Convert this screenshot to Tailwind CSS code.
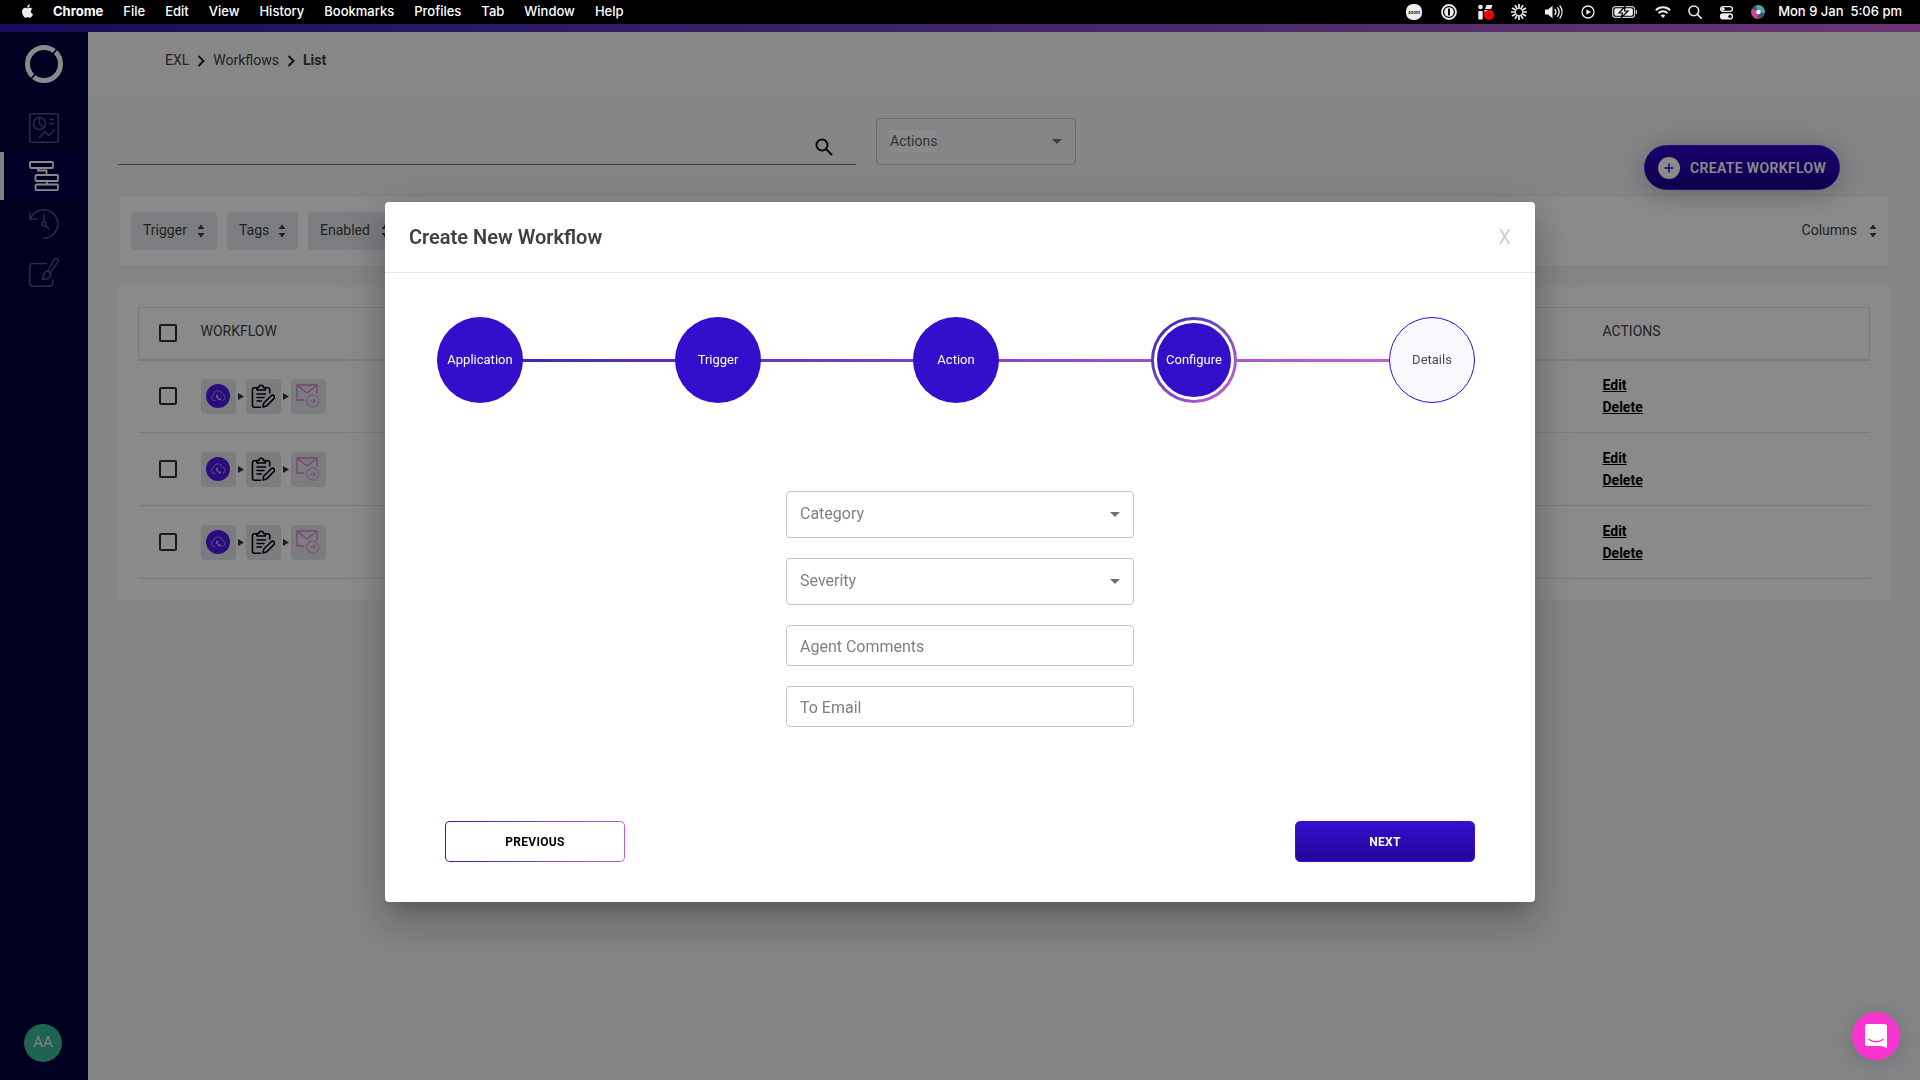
<!DOCTYPE html>
<html lang="en">
<head>
    <meta charset="UTF-8">
    <meta name="viewport" content="width=device-width, initial-scale=1.0">
    <title>Workflows - Create New Workflow</title>
    <script src="https://cdn.jsdelivr.net/npm/@tailwindcss/browser@4"></script>
</head>
<body class="flex min-h-screen flex-col bg-[#f4f6f9] font-[Roboto,'Noto_Sans',sans-serif] text-sm text-[#3f4045]">

    <!-- Shared icons -->
    <svg class="hidden">
        <symbol id="sort" viewBox="0 0 8 14">
            <path d="M4 0.5 7.500 5h-7zM4 13.500 7.500 9h-7z" fill="currentColor"/>
        </symbol>
        <symbol id="cloud" viewBox="0 0 24 24">
            <circle cx="12" cy="12" r="12" fill="#4f17e8"/>
            <path d="M9.500 16.500H8.300a3 3 0 0 1-.9-5.800 4.700 4.700 0 0 1 9.200-.3 3.100 3.100 0 0 1-.2 6.100" fill="none" stroke="#a48cf0" stroke-width="1"/>
            <path d="M10.500 10.500c-1.400 2.500 1.300 6 4.500 5.800l.3-1.500-1.500-.6-.8.600-1.400-1.800.6-.8-.5-1.500z" fill="#c5b5fa"/>
        </symbol>
        <symbol id="clipboard" viewBox="0 0 24 24">
            <g fill="none" stroke="#000" stroke-width="1.600" stroke-linecap="round" stroke-linejoin="round">
                <path d="M6 3.800H3.200A1.700 1.700 0 0 0 1.500 5.500v16a1.700 1.700 0 0 0 1.700 1.700H9.500M14 3.800h3a1.700 1.700 0 0 1 1.700 1.700V9"/>
                <path d="M6 6V3.500h2a2.200 2.200 0 0 1 4.400 0h2V6z"/>
                <path d="M6 10h8.500M6 13.500h7M6 17h4.500"/>
                <path d="m12 23 .8-4 7.500-7.300a1.900 1.900 0 0 1 2.700 2.700L15.500 22z"/>
            </g>
        </symbol>
        <symbol id="mail" viewBox="0 0 24 24">
            <g fill="none" stroke-width="1.300">
                <path d="M8.500 16H1V1h20v9" stroke="#e07fce"/>
                <path d="m1 1 8.600 7a2.200 2.200 0 0 0 2.800 0L21 1" stroke="#e07fce"/>
                <circle cx="16.800" cy="17" r="6" stroke="#dba9d6"/>
                <path d="M14 17h5.500m-2.300-2.300 2.300 2.300-2.300 2.300" stroke="#dba9d6"/>
            </g>
        </symbol>
    </svg>

    <!-- System menu bar -->
    <header class="relative z-30 flex h-6 items-center justify-between bg-black pr-[18px] pl-5 font-[Inter,sans-serif] text-[13px] leading-5 font-medium text-white">
        <nav class="flex items-center gap-5 pb-0.5">
            <svg class="h-4 w-[13px]" viewBox="0 0 14 17" fill="#eee"><path d="M11.600 9c0-1.700 1.400-2.500 1.500-2.600-.8-1.200-2.100-1.400-2.500-1.400-1.100-.1-2.100.6-2.600.6-.6 0-1.400-.6-2.300-.6C4.500 5 3.400 5.700 2.800 6.700c-1.300 2.200-.3 5.400.9 7.200.6.9 1.300 1.800 2.300 1.800.9 0 1.300-.6 2.400-.6s1.400.6 2.400.6 1.600-.9 2.200-1.700c.7-1 1-2 1-2-.1-.1-2.400-.9-2.400-3zM9.800 3.800c.5-.6.800-1.400.7-2.300-.7 0-1.600.5-2.100 1.100-.4.500-.8 1.400-.7 2.200.8.100 1.600-.4 2.100-1z"/></svg>
            <span class="font-bold">Chrome</span>
            <span>File</span>
            <span>Edit</span>
            <span>View</span>
            <span>History</span>
            <span>Bookmarks</span>
            <span>Profiles</span>
            <span>Tab</span>
            <span>Window</span>
            <span>Help</span>
        </nav>
        <div class="flex items-center gap-[17px]">
            <svg class="mr-0.5 size-4" viewBox="0 0 16 16"><rect width="16" height="16" rx="7" fill="#eee"/><text x="8" y="9.500" font-size="4.500" font-weight="700" text-anchor="middle" fill="#222">zoom</text></svg>
            <svg class="mr-1 size-4" viewBox="0 0 16 16"><circle cx="8" cy="8" r="7" fill="none" stroke="#eee" stroke-width="1.800"/><circle cx="8" cy="8" r="4.800" fill="#eee"/><rect x="7" y="4.500" width="2" height="7" rx=".6" fill="#000"/></svg>
            <svg class="size-4" viewBox="0 0 16 16"><circle cx="2.500" cy="3" r="2.300" fill="#eee"/><path d="M.3 7h4.400v8.500H.3zM8.500 1h6L13 5H7zM6.500 6h5l-1 3H6.500z" fill="#eee"/><circle cx="11" cy="11" r="5" fill="#f00"/><circle cx="11" cy="11" r="1.600" fill="#700"/></svg>
            <svg class="size-4" viewBox="0 0 16 16" stroke="#eee" stroke-width="1.700"><path d="M8 0v5M8 11v5M0 8h5M11 8h5M4 1.100l2.500 4.300M9.500 10.600l2.500 4.300M12 1.100 9.500 5.400M6.500 10.600 4 14.900M1.100 4l4.300 2.500M10.600 9.500l4.300 2.500M14.900 4l-4.300 2.500M5.400 9.500 1.100 12"/></svg>
            <svg class="h-4 w-5" viewBox="0 0 20 16"><path d="M1 5.500h3l4.500-3.700v12.400L4 10.500H1z" fill="#eee"/><path d="M11 5.500a4 4 0 0 1 0 5M13.500 3.700a7 7 0 0 1 0 8.600M16 2a10 10 0 0 1 0 12" fill="none" stroke="#eee" stroke-width="1.300" stroke-linecap="round"/></svg>
            <svg class="size-[14px]" viewBox="0 0 14 14"><circle cx="7" cy="7" r="6" fill="none" stroke="#eee" stroke-width="1.300"/><path d="m5.300 4.300 4.500 2.700-4.500 2.700z" fill="#eee"/></svg>
            <svg class="h-3 w-[26px]" viewBox="0 0 26 12"><rect x=".6" y=".6" width="22" height="10.800" rx="3" fill="none" stroke="#ccc" stroke-width="1.100"/><rect x="2.300" y="2.300" width="18.600" height="7.400" rx="1.600" fill="#eee"/><path d="M13 .5 7 7h3.500L9.500 11.500 16 5h-3.500z" fill="#eee" stroke="#000" stroke-width="1.200"/><path d="M24.300 4v4" stroke="#ccc" stroke-width="1.200"/></svg>
            <svg class="h-3 w-4" viewBox="0 0 16 12" fill="none" stroke="#eee" stroke-width="1.900"><path d="M.8 4.300a10.200 10.200 0 0 1 14.400 0M3.500 7.100a6.400 6.400 0 0 1 9 0"/><path d="m8 12-2.300-2.500a3.300 3.300 0 0 1 4.600 0z" fill="#eee" stroke="none"/></svg>
            <svg class="size-[14px]" viewBox="0 0 14 14" fill="none" stroke="#eee" stroke-width="1.500"><circle cx="5.800" cy="5.800" r="4.900"/><path d="m9.400 9.400 4 4" stroke-linecap="round"/></svg>
            <svg class="size-[15px]" viewBox="0 0 15 15"><rect x="1.600" y="1.600" width="11.800" height="4.800" rx="2.400" fill="none" stroke="#eee" stroke-width="1.300"/><circle cx="4" cy="4" r="1.800" fill="#eee"/><rect x=".9" y="8.300" width="13.200" height="6.200" rx="3.100" fill="#eee"/><circle cx="11" cy="11.400" r="1.700" fill="#000"/></svg>
            <svg class="size-[14px]" viewBox="0 0 14 14"><circle cx="7" cy="7" r="7" fill="#44506e"/><path d="M1 4a7 7 0 0 0 5 9.900c2-2 1-4 1-6.900C5 5 3 4 1 4z" fill="#c04a90"/><path d="M5 .4A7 7 0 0 1 13.900 8C11 8 9 7 7 6 6 4 5 2 5 .4z" fill="#4aa79f"/><circle cx="7.500" cy="7" r="2.300" fill="#e8f4ff"/></svg>
            <span class="-ml-1 pb-0.5 whitespace-pre">Mon 9 Jan  5:06 pm</span>
        </div>
    </header>

    <div class="h-2 bg-linear-to-r from-[#2a14a8] to-[#c862d6]"></div>

    <div class="flex flex-1">
        <!-- Sidebar -->
        <aside class="flex w-22 shrink-0 flex-col items-center bg-[#00003c] pb-[18px]">
            <a href="#" aria-label="Home" class="mt-[13px] mb-[21px]">
                <svg class="block size-[38px]" viewBox="0 0 38 38" fill="none">
                    <circle cx="19" cy="19" r="16.500" stroke="#fff" stroke-width="5"/>
                    <path d="m27 10 5-6M11 28l-5 6" stroke="#00003c" stroke-width="1.600"/>
                </svg>
            </a>
            <nav class="flex w-full flex-col">
                <a href="#" aria-label="Reports" class="flex h-12 items-center justify-center text-[#53537a]">
                    <svg class="size-[30px]" viewBox="0 0 30 30" fill="none" stroke="currentColor" stroke-width="1.500">
                        <rect x=".8" y=".8" width="28.400" height="28.400" rx="2"/>
                        <circle cx="10.500" cy="10.500" r="6"/>
                        <path d="M10.500 4.500v6l4 4M20 6.500h5M20 10.500h5M10 25l6-6.500 3.500 4L26 16.500"/>
                    </svg>
                </a>
                <a href="#" aria-label="Workflows" class="flex h-12 items-center justify-center border-l-4 border-[#f0f0f0] bg-[#07004a] pr-1 text-white">
                    <svg class="size-[30px]" viewBox="0 0 30 30" fill="none" stroke="currentColor" stroke-width="1.800">
                        <rect x="1" y="1" width="23" height="6" rx="1"/>
                        <rect x="6.500" y="14" width="22.500" height="6" rx="1"/>
                        <rect x="6.500" y="23.500" width="22.500" height="5.600" rx="1"/>
                        <path d="M9 7v2.500h8.500V14M17.800 20v3.500"/>
                    </svg>
                </a>
                <a href="#" aria-label="History" class="flex h-12 items-center justify-center text-[#53537a]">
                    <svg class="size-[30px]" viewBox="0 0 30 30" fill="none" stroke="currentColor" stroke-width="1.500">
                        <path d="M1 3v7h7M1.500 9.500A14.200 14.200 0 1 1 14.500 29.200M15 5v8M16.500 16.500l4 4"/>
                        <circle cx="15" cy="15" r="2"/>
                    </svg>
                </a>
                <a href="#" aria-label="Editor" class="flex h-12 items-center justify-center text-[#53537a]">
                    <svg class="size-[30px]" viewBox="0 0 30 30" fill="none" stroke="currentColor" stroke-width="1.500">
                        <path d="M18 6.500H4A3.200 3.200 0 0 0 .8 9.700V26A3.200 3.200 0 0 0 4 29.200h16.500a3.200 3.200 0 0 0 3.200-3.200v-3.500"/>
                        <path d="M19 14 25.500 2a2.200 2.200 0 0 1 3.700 2.200L21.500 16zM19 14c-4 0-4.500 4-5.500 8.500 4.500.3 9-1.500 8-6.500z"/>
                    </svg>
                </a>
            </nav>
            <button class="mt-auto mr-0.5 size-[38px] rounded-full bg-[#3bb795] text-[15px] text-[#dff5ee]">AA</button>
        </aside>

        <!-- Main content -->
        <main class="min-w-0 flex-1">
            <nav class="flex h-[66px] items-start gap-2 bg-[#f9f9fc] pt-[18px] pl-[77px] leading-5">
                <a href="#">EXL</a>
                <svg class="mt-[5px] h-3 w-2" viewBox="0 0 8 12" fill="none" stroke="#222" stroke-width="2"><path d="m1.500 1 5 5-5 5"/></svg>
                <a href="#">Workflows</a>
                <svg class="mt-[5px] h-3 w-2" viewBox="0 0 8 12" fill="none" stroke="#222" stroke-width="2"><path d="m1.500 1 5 5-5 5"/></svg>
                <a href="#" class="font-bold">List</a>
            </nav>

            <div class="px-[30px] pt-5">
                <div class="flex h-[77px] items-start gap-5">
                    <div class="flex h-[47px] w-[738px] items-center border-b border-[#77787c] pr-[23px]">
                        <input type="search" aria-label="Search workflows" class="h-full min-w-0 flex-1 outline-none">
                        <button aria-label="Search" class="mt-3">
                            <svg class="block size-[18px]" viewBox="0 0 18 18" fill="none" stroke="#111" stroke-width="2"><circle cx="7" cy="7" r="5.500"/><path d="m11 11 6 6"/></svg>
                        </button>
                    </div>
                    <div class="relative h-[47px] w-[200px]">
                        <select id="bulk-actions" class="h-full w-full appearance-none rounded border border-[#c4c4c4]">
                            <option></option>
                        </select>
                        <label for="bulk-actions" class="pointer-events-none absolute top-3 left-[14px] bg-white leading-[22px] text-[#606165]">Actions</label>
                        <svg class="pointer-events-none absolute top-[21px] right-[14px] h-[5px] w-[10px]" viewBox="0 0 10 5"><path d="M0 0h10L5 5z" fill="#707070"/></svg>
                    </div>
                    <button class="mt-[27px] mr-[50px] ml-auto flex h-[45px] w-[196px] items-center justify-center gap-[10px] rounded-full border border-[#3a1ae0] bg-linear-to-b from-[#2e05c8] to-[#1c008c] font-semibold tracking-wide whitespace-nowrap text-white shadow-[0_4px_32px_rgba(0,0,0,0.25)]">
                        <svg class="size-[22px] shrink-0" viewBox="0 0 22 22"><circle cx="11" cy="11" r="11" fill="#fff"/><path d="M11 6.500v9M6.500 11h9" stroke="#2e05c8" stroke-width="1.500"/></svg>
                        CREATE WORKFLOW
                    </button>
                </div>

                <!-- Filters -->
                <div class="flex h-[72px] items-center justify-between rounded border border-[#e9eaf1] bg-white px-3">
                    <div class="flex gap-[10px]">
                        <button class="flex h-[38px] w-[86px] items-center justify-between rounded bg-[#e6e8ef] px-3"><span class="pb-0.5">Trigger</span> <svg class="h-[14px] w-2"><use href="#sort"/></svg></button>
                        <button class="flex h-[38px] w-[71px] items-center justify-between rounded bg-[#e6e8ef] px-3"><span class="pb-0.5">Tags</span> <svg class="h-[14px] w-2"><use href="#sort"/></svg></button>
                        <button class="flex h-[38px] w-[93px] items-center justify-between rounded bg-[#e6e8ef] px-3"><span class="pb-0.5">Enabled</span> <svg class="h-[14px] w-2"><use href="#sort"/></svg></button>
                    </div>
                    <button class="flex items-center gap-3"><span class="pb-0.5">Columns</span> <svg class="h-[14px] w-2"><use href="#sort"/></svg></button>
                </div>

                <!-- Workflow list -->
                <div class="mt-5 bg-white px-5 pt-5 pb-[21px]">
                    <table class="w-full table-fixed border-collapse text-left">
                        <thead>
                            <tr class="h-[52px] border border-b-2 border-[#e2e2ee]">
                                <th class="w-[62px] pl-5"><input type="checkbox" aria-label="Select all workflows" class="block size-[18px] appearance-none rounded-xs border-2 border-[#303036]"></th>
                                <th class="pb-1 font-normal">WORKFLOW</th>
                                <th class="w-[267px] pb-1 font-normal">ACTIONS</th>
                            </tr>
                        </thead>
                        <tbody>
                            <tr class="h-[73px] border-b border-[#e2e2ee]">
                                <td class="pl-5"><input type="checkbox" aria-label="Select workflow 1" class="block size-[18px] appearance-none rounded-xs border-2 border-[#303036]"></td>
                                <td>
                                    <div class="flex items-center gap-0.5">
                                        <span class="flex size-[35px] items-center justify-center rounded bg-[#e2e6ea]"><svg class="size-6"><use href="#cloud"/></svg></span>
                                        <svg class="h-[7px] w-[6px]" viewBox="0 0 6 7"><path d="M0 0v7l6-3.500z" fill="#333"/></svg>
                                        <span class="flex size-[35px] items-center justify-center rounded bg-[#e2e6ea]"><svg class="size-6"><use href="#clipboard"/></svg></span>
                                        <svg class="h-[7px] w-[6px]" viewBox="0 0 6 7"><path d="M0 0v7l6-3.500z" fill="#333"/></svg>
                                        <span class="flex size-[35px] items-center justify-center rounded bg-[#e2e6ea]"><svg class="size-6"><use href="#mail"/></svg></span>
                                    </div>
                                </td>
                                <td class="leading-[22px] font-bold text-black"><a href="#" class="block w-fit underline">Edit</a><a href="#" class="block w-fit underline">Delete</a></td>
                            </tr>
                            <tr class="h-[73px] border-b border-[#e2e2ee]">
                                <td class="pl-5"><input type="checkbox" aria-label="Select workflow 2" class="block size-[18px] appearance-none rounded-xs border-2 border-[#303036]"></td>
                                <td>
                                    <div class="flex items-center gap-0.5">
                                        <span class="flex size-[35px] items-center justify-center rounded bg-[#e2e6ea]"><svg class="size-6"><use href="#cloud"/></svg></span>
                                        <svg class="h-[7px] w-[6px]" viewBox="0 0 6 7"><path d="M0 0v7l6-3.500z" fill="#333"/></svg>
                                        <span class="flex size-[35px] items-center justify-center rounded bg-[#e2e6ea]"><svg class="size-6"><use href="#clipboard"/></svg></span>
                                        <svg class="h-[7px] w-[6px]" viewBox="0 0 6 7"><path d="M0 0v7l6-3.500z" fill="#333"/></svg>
                                        <span class="flex size-[35px] items-center justify-center rounded bg-[#e2e6ea]"><svg class="size-6"><use href="#mail"/></svg></span>
                                    </div>
                                </td>
                                <td class="leading-[22px] font-bold text-black"><a href="#" class="block w-fit underline">Edit</a><a href="#" class="block w-fit underline">Delete</a></td>
                            </tr>
                            <tr class="h-[73px] border-b border-[#e2e2ee]">
                                <td class="pl-5"><input type="checkbox" aria-label="Select workflow 3" class="block size-[18px] appearance-none rounded-xs border-2 border-[#303036]"></td>
                                <td>
                                    <div class="flex items-center gap-0.5">
                                        <span class="flex size-[35px] items-center justify-center rounded bg-[#e2e6ea]"><svg class="size-6"><use href="#cloud"/></svg></span>
                                        <svg class="h-[7px] w-[6px]" viewBox="0 0 6 7"><path d="M0 0v7l6-3.500z" fill="#333"/></svg>
                                        <span class="flex size-[35px] items-center justify-center rounded bg-[#e2e6ea]"><svg class="size-6"><use href="#clipboard"/></svg></span>
                                        <svg class="h-[7px] w-[6px]" viewBox="0 0 6 7"><path d="M0 0v7l6-3.500z" fill="#333"/></svg>
                                        <span class="flex size-[35px] items-center justify-center rounded bg-[#e2e6ea]"><svg class="size-6"><use href="#mail"/></svg></span>
                                    </div>
                                </td>
                                <td class="leading-[22px] font-bold text-black"><a href="#" class="block w-fit underline">Edit</a><a href="#" class="block w-fit underline">Delete</a></td>
                            </tr>
                        </tbody>
                    </table>
                </div>
            </div>
        </main>
    </div>

    <!-- Modal -->
    <div class="fixed inset-0 top-6 z-20 flex items-center justify-center bg-black/46">
        <div role="dialog" aria-labelledby="modal-title" class="w-[1150px] max-w-full rounded bg-white shadow-[0_11px_15px_-7px_rgba(0,0,0,0.2),0_24px_38px_3px_rgba(0,0,0,0.14),0_9px_46px_8px_rgba(0,0,0,0.12)]">
            <div class="flex h-[71px] items-center justify-between border-b border-[#e6e6f2] px-6">
                <h2 id="modal-title" class="text-xl font-semibold text-[#3f4045]">Create New Workflow</h2>
                <button aria-label="Close" class="text-xl text-[#cfcfcf]">X</button>
            </div>

            <div class="pt-11 pr-[60px] pb-10 pl-[52px]">
                <!-- Steps -->
                <ol class="flex items-center justify-between bg-[linear-gradient(to_right,#3a22b0,#cc66d8)] bg-[length:100%_3px] bg-center bg-no-repeat text-[13px] text-white">
                    <li class="flex size-[86px] items-center justify-center rounded-full bg-[#330fcc]">Application</li>
                    <li class="flex size-[86px] items-center justify-center rounded-full bg-[#330fcc]">Trigger</li>
                    <li class="flex size-[86px] items-center justify-center rounded-full bg-[#330fcc]">Action</li>
                    <li class="flex size-[86px] rounded-full bg-linear-to-br from-[#3322b0] to-[#c864d8] p-[3px]">
                        <span class="flex flex-1 items-center justify-center rounded-full border-3 border-white bg-[#330fcc]">Configure</span>
                    </li>
                    <li class="flex size-[86px] items-center justify-center rounded-full border border-[#330fcc] bg-[#f9f9fe] text-[#4a4a50]">Details</li>
                </ol>

                <form class="pl-2">
                    <div class="mx-auto flex w-[348px] flex-col gap-5 pt-[88px] pb-[94px] text-base text-[#808080]">
                        <div class="relative">
                            <select aria-label="Category" class="block h-[47px] w-full appearance-none rounded border border-[#c4c4c4] px-[13px] pb-0.5">
                                <option>Category</option>
                            </select>
                            <svg class="pointer-events-none absolute top-[21px] right-[14px] h-[5px] w-[10px]" viewBox="0 0 10 5"><path d="M0 0h10L5 5z" fill="#707070"/></svg>
                        </div>
                        <div class="relative">
                            <select aria-label="Severity" class="block h-[47px] w-full appearance-none rounded border border-[#c4c4c4] px-[13px] pb-0.5">
                                <option>Severity</option>
                            </select>
                            <svg class="pointer-events-none absolute top-[21px] right-[14px] h-[5px] w-[10px]" viewBox="0 0 10 5"><path d="M0 0h10L5 5z" fill="#707070"/></svg>
                        </div>
                        <input type="text" aria-label="Agent Comments" placeholder="Agent Comments" class="h-[41px] rounded border border-[#c4c4c4] px-[13px] pt-0.5 placeholder:text-[#808080]">
                        <input type="email" aria-label="To Email" placeholder="To Email" class="h-[41px] rounded border border-[#c4c4c4] px-[13px] pt-0.5 placeholder:text-[#808080]">
                    </div>
                    <div class="flex justify-between text-xs font-bold tracking-wide">
                        <button type="button" class="flex h-[41px] w-[180px] rounded-[5px] bg-linear-to-r from-[#3314b4] to-[#c45ad6] p-px text-black">
                            <span class="flex h-full w-full items-center justify-center rounded bg-white">PREVIOUS</span>
                        </button>
                        <button type="submit" class="h-[41px] w-[180px] rounded-[5px] border border-[#3311e0] bg-linear-to-b from-[#330fcc] to-[#26069a] text-white">NEXT</button>
                    </div>
                </form>
            </div>
        </div>
    </div>

    <!-- Chat launcher -->
    <button aria-label="Open chat" class="fixed right-5 bottom-5 z-30 flex size-12 items-center justify-center rounded-full bg-[#f934cf] shadow-[0_2px_24px_rgba(0,0,0,0.16)]">
        <svg class="h-6 w-[22px]" viewBox="0 0 22 24"><path d="M2.500 0h17A2.500 2.500 0 0 1 22 2.500V24l-5.500-2h-14A2.500 2.500 0 0 1 0 19.500v-17A2.500 2.500 0 0 1 2.500 0z" fill="#fff"/><path d="M4 15.500c4 3 10 3 14 0" fill="none" stroke="#f934cf" stroke-width="1.500" stroke-linecap="round"/></svg>
    </button>
</body>
</html>
